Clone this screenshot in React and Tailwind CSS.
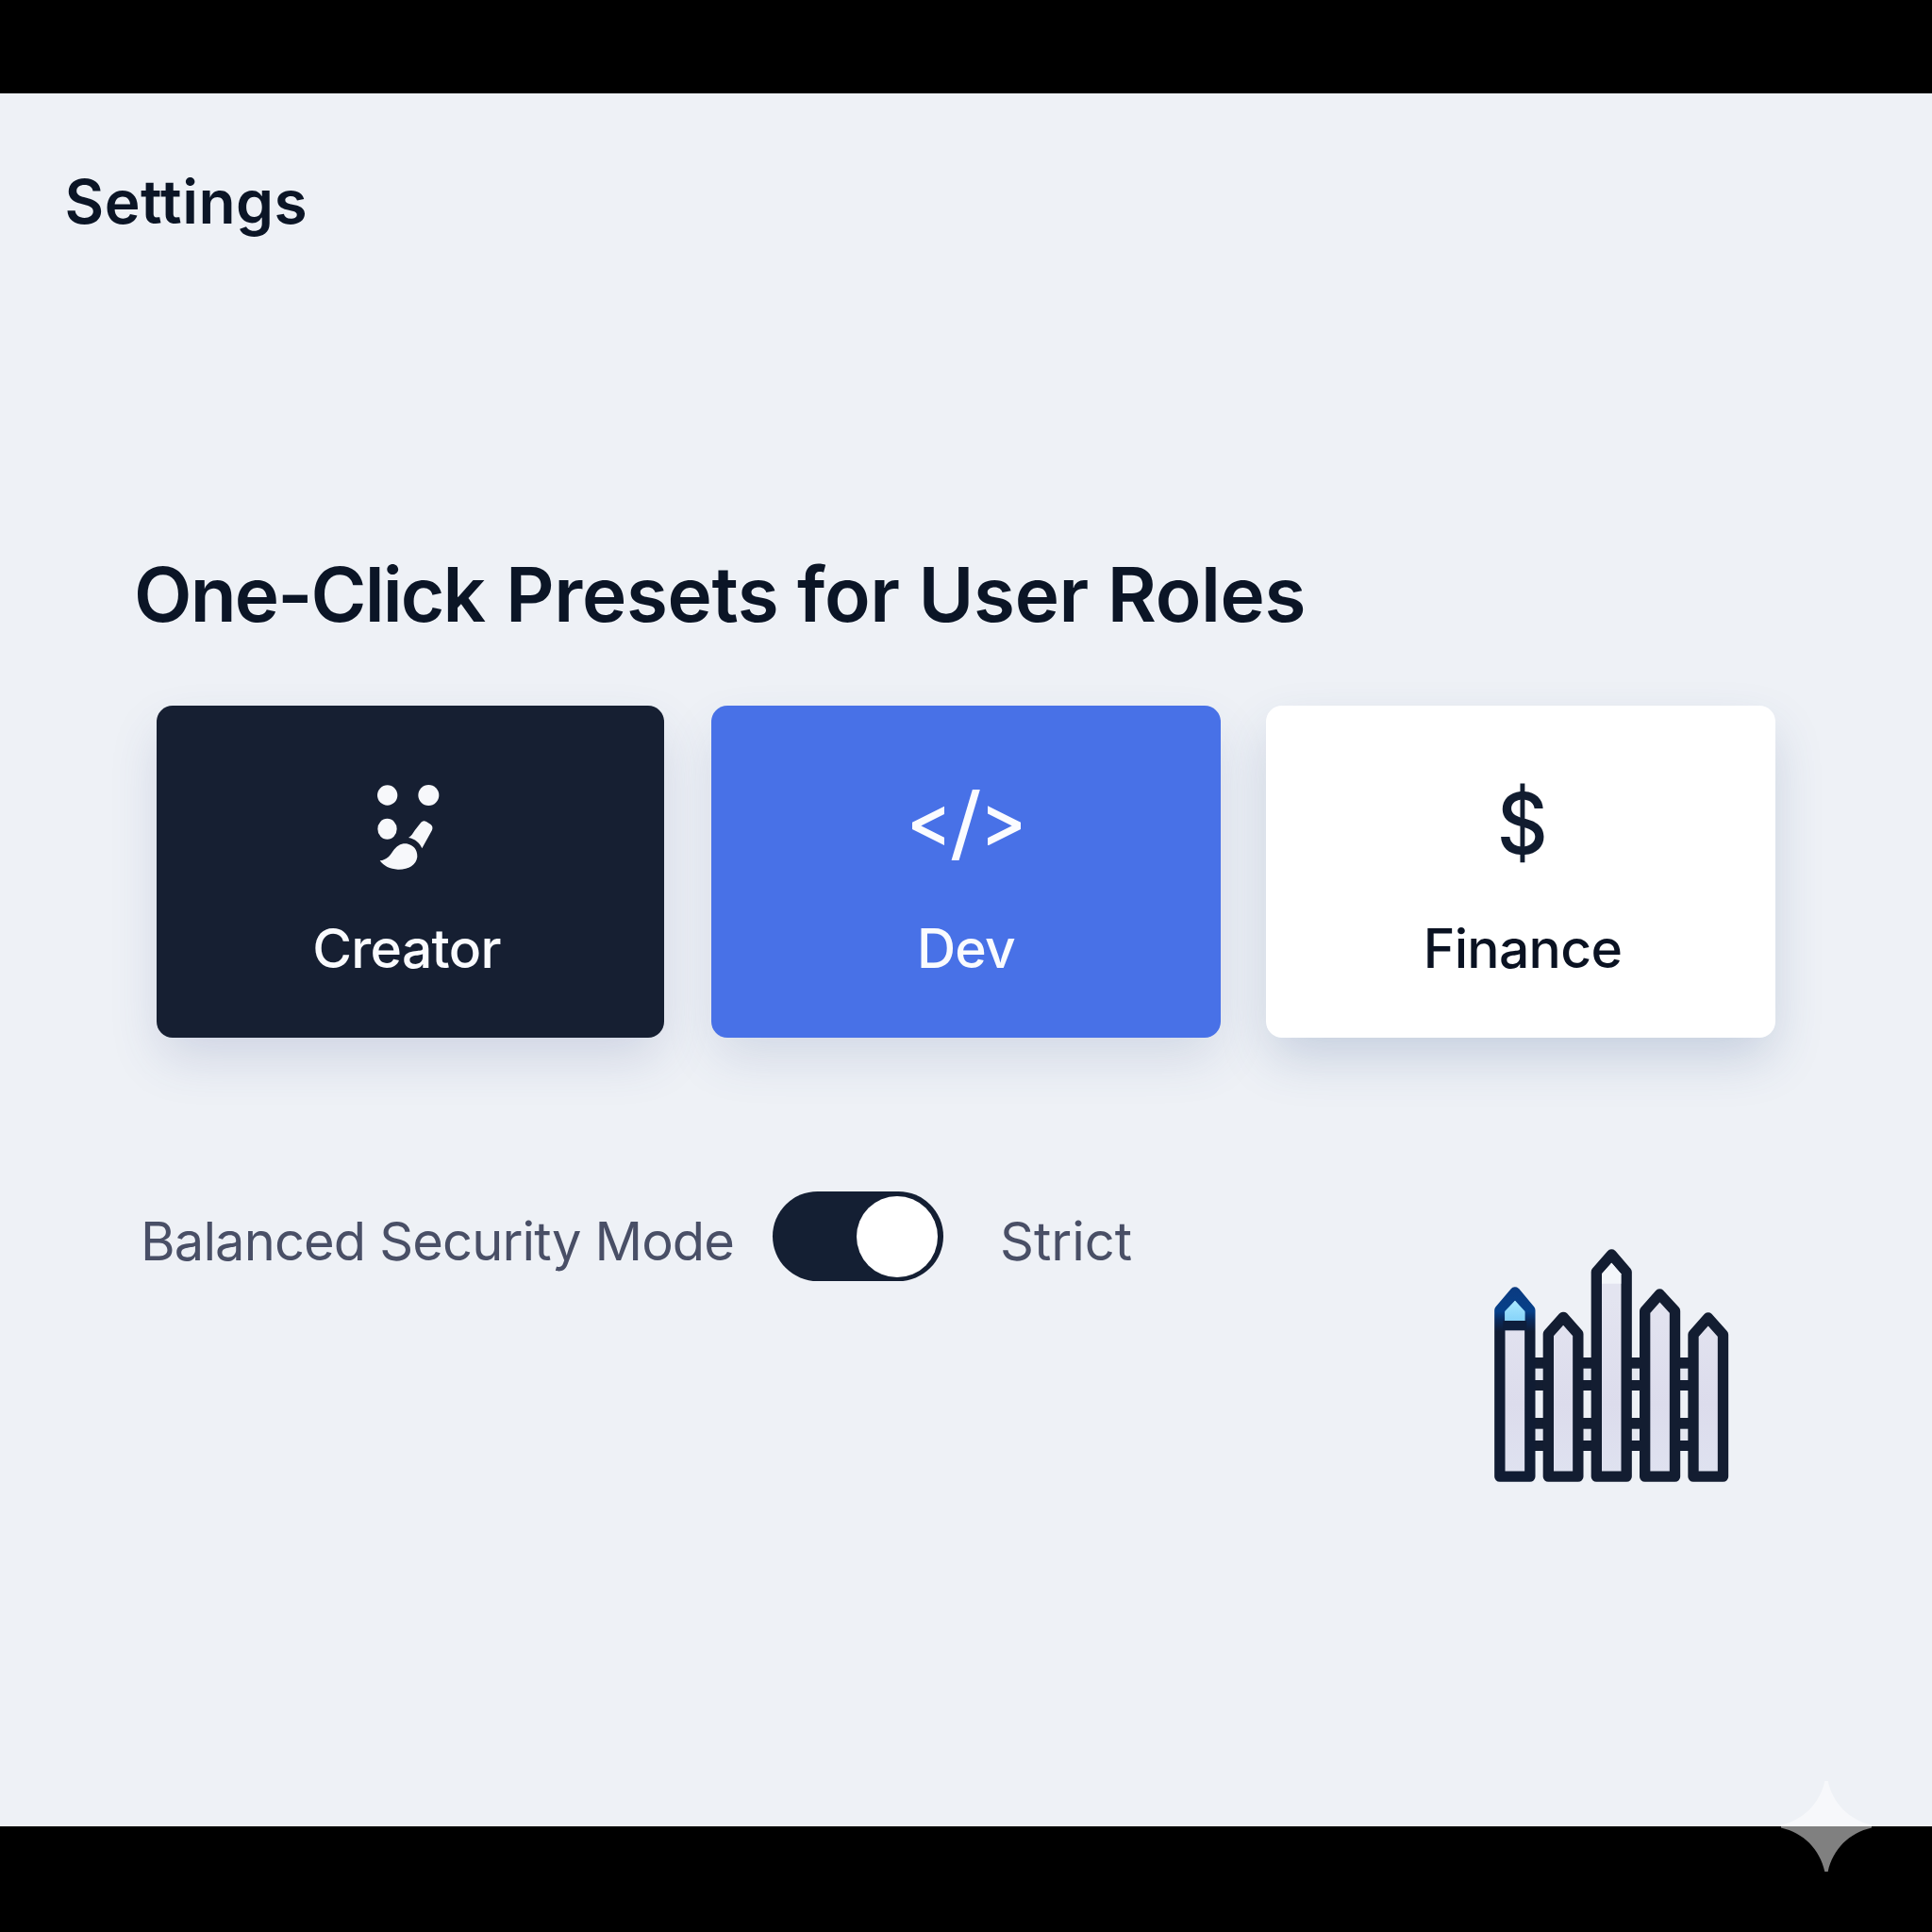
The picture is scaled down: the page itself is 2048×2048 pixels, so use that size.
function CreatorIcon() {
  return (
    <svg viewBox="0 0 330 390" className="h-[130px] w-[110px]" fill="#f7f8fb">
      <circle cx="92" cy="99" r="32" />
      <circle cx="223" cy="99" r="33" />
      <ellipse cx="91.500" cy="206" rx="30.500" ry="33" />
      <path d="M159 234 C168 229 173 221 179 211 L199 185 Q206 177 216 183 L230 192 Q238 198 234 210 L202 268 C195 250 180 238 159 234 Z" />
      <path d="M68 307 C90 305 101 290 110 276 C122 259 137 251 153 253 C174 257 188 272 187 295 C184 322 158 336 125 335 C100 334 80 324 68 307 Z" />
    </svg>
  );
}

function CodeIcon() {
  return (
    <div className="flex h-[130px] items-start pl-[2px] pt-[27px]">
      <svg viewBox="81 131 102 128" className="mt-[16.700px] h-[42.700px] w-[34px]" fill="none" stroke="#fbfcff" strokeWidth="22.500" strokeMiterlimit="10">
        <path d="M220 127 L84 195 L220 263" />
      </svg>
      <svg viewBox="203 81 94 226" className="ml-[6.700px] h-[75.300px] w-[31.300px]" fill="none" stroke="#fbfcff" strokeWidth="23">
        <path d="M289.500 61 L210.500 327" />
      </svg>
      <svg viewBox="321 131 105 128" className="ml-[8px] mt-[16.700px] h-[42.700px] w-[35px]" fill="none" stroke="#fbfcff" strokeWidth="22.500" strokeMiterlimit="10">
        <path d="M287 127 L423 195 L287 263" />
      </svg>
    </div>
  );
}

function DollarIcon() {
  return (
    <div className="flex h-[130px] items-start pl-[4px]">
      <span className="inline-block scale-x-[0.94] text-[89px] font-[500] leading-[125px] text-[#111c2f]">$</span>
    </div>
  );
}

const presets = [
  { name: "Creator", Icon: CreatorIcon, card: "w-[538px] bg-[#161f32] text-[#fafbfe] shadow-[0_24px_54px_-5px_rgba(60,75,140,0.18)]", label: "pr-[7px]" },
  { name: "Dev", Icon: CodeIcon, card: "ml-[50px] w-[540px] bg-[#4871e7] text-[#fafbfe] shadow-[0_24px_54px_-5px_rgba(60,85,140,0.16)]", label: "pl-[1px]" },
  { name: "Finance", Icon: DollarIcon, card: "ml-[48.500px] w-[540px] bg-white text-[#0a1222] shadow-[0_24px_54px_-5px_rgba(50,80,135,0.22)]", label: "pl-[4px]" },
];

function Fence() {
  return (
    <svg viewBox="0 0 900 840" className="h-[280px] w-[300px]">
      <defs>
        <linearGradient id="tip" gradientUnits="userSpaceOnUse" x1="0" y1="160" x2="0" y2="305">
          <stop offset="0" stopColor="#0b3a80" />
          <stop offset="0.55" stopColor="#064089" />
          <stop offset="0.75" stopColor="#0a2a5c" />
          <stop offset="1" stopColor="#101c33" />
        </linearGradient>
        <linearGradient id="tipFill" gradientUnits="userSpaceOnUse" x1="0" y1="205" x2="0" y2="270">
          <stop offset="0" stopColor="#a9e8ff" />
          <stop offset="1" stopColor="#86d3f9" />
        </linearGradient>
        <linearGradient id="slat" gradientUnits="userSpaceOnUse" x1="0" y1="200" x2="0" y2="760">
          <stop offset="0" stopColor="#e3e4f0" />
          <stop offset="0.6" stopColor="#dcdcec" />
          <stop offset="1" stopColor="#dfe2f0" />
        </linearGradient>
      </defs>
      <g fill="#e4e7f0">
        <rect x="190" y="400" width="510" height="70" />
        <rect x="190" y="600" width="510" height="60" />
      </g>
      <g fill="#131d31">
        <rect x="190" y="387" width="510" height="35" />
        <rect x="190" y="459" width="510" height="33" />
        <rect x="190" y="579" width="510" height="35" />
        <rect x="190" y="651" width="510" height="33" />
      </g>
      <g fill="url(#slat)" stroke="#131d31" strokeWidth="34" strokeLinejoin="round">
        <path stroke="url(#tip)" d="M89.500 765.500 V237 L138 180 L185.500 237 V765.500 Z" />
        <path d="M244 765.500 V312 L291.500 259 L338.500 312 V765.500 Z" />
        <path d="M397 765.500 V115 L445 60 L492.500 115 V765.500 Z" />
        <path d="M551 765.500 V239 L598 186 L646.500 239 V765.500 Z" />
        <path d="M705 765.500 V314 L752 261 L799.500 314 V765.500 Z" />
      </g>
      <path fill="url(#tipFill)" d="M105.500 270 V240 L138 206 L169.500 240 V270 Z" />
      <rect x="100" y="270" width="75" height="31" fill="#0e1e3c" />
      <path fill="#f3f6fa" d="M414 152 V121 L445 86 L475 121 V152 Z" />
    </svg>
  );
}

function Sparkle() {
  return (
    <svg viewBox="0 0 96 96" className="absolute left-[1888px] top-[1888px] size-[96px]" fill="#fff" fillOpacity="0.5">
      <path d="M46.300 0 H49.700 C55 24 72 41 96 46.500 V49.500 C72 55 55 72 49.700 96 H46.300 C41 72 24 55 0 49.500 V46.500 C24 41 41 24 46.300 0 Z" />
    </svg>
  );
}

export default function App() {
  return (
    <div className="relative flex h-[2048px] w-[2048px] flex-col overflow-hidden bg-black pb-[112px] pt-[99px] font-['Inter',sans-serif]">
      <main className="flex-1 bg-[#eef1f6] pt-[75px]">
        <h1 className="ml-[68.500px] text-[64px] font-[590] leading-[80px] tracking-[0.5px] text-[#0b1526]">Settings</h1>
        <section className="mt-[328px]">
          <h2 className="ml-[142px] whitespace-nowrap text-[80px] font-[580] leading-[96px] tracking-[-0.350px] text-[#0b1526]">
            <span className="mr-[3px] tracking-[-1.850px]">One-Click</span> Presets for User Roles
          </h2>
          <div className="ml-[165.500px] mt-[70px] flex">
            {presets.map(({ name, Icon, card, label }) => (
              <button key={name} className={`flex h-[352px] shrink-0 flex-col items-center rounded-[17px] pt-[62px] ${card}`}>
                <Icon />
                <span className={`mt-[30px] text-[57px] font-[490] leading-[72px] tracking-[-0.700px] ${label}`}>{name}</span>
              </button>
            ))}
          </div>
        </section>
        <section className="ml-[149px] mt-[163px] flex items-start text-[56px] font-[420] leading-[72px] text-[#494f66]">
          <span className="mt-[17px] w-[669.500px] whitespace-nowrap tracking-[-0.850px]">Balanced Security Mode</span>
          <button role="switch" aria-checked="true" aria-label="Strict mode" className="mt-[0.300px] flex h-[94.700px] w-[181px] items-center justify-end rounded-full bg-[#141f33] pr-[5.500px]">
            <span className="size-[86px] rounded-full bg-white" />
          </button>
          <span className="ml-[60.500px] mt-[17px] w-[500px]">Strict</span>
          <div className="mt-[47px]">
            <Fence />
          </div>
        </section>
      </main>
      <Sparkle />
    </div>
  );
}
